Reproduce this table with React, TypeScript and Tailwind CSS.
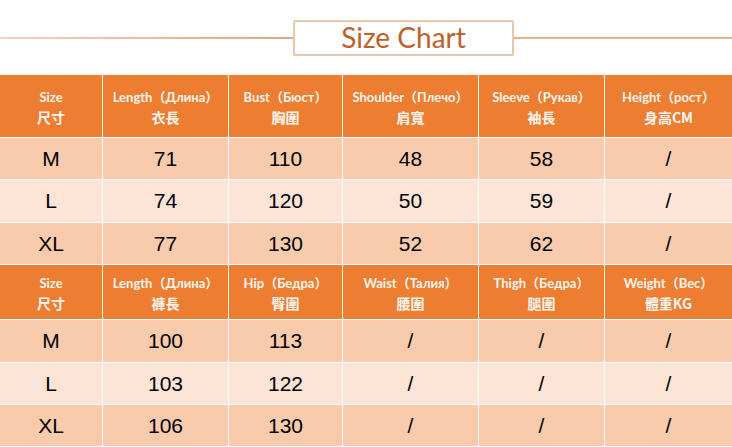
import React from 'react';

type Block = {
  heads: [string, string][];
  rows: string[][];
  rowHeights: string[];
};

const top: Block = {
  heads: [
    ['Size', '尺寸'],
    ['Length（Длина）', '衣長'],
    ['Bust（Бюст）', '胸圍'],
    ['Shoulder（Плечо）', '肩寬'],
    ['Sleeve（Рукав）', '袖長'],
    ['Height（рост）', '身高CM'],
  ],
  rows: [
    ['M', '71', '110', '48', '58', '/'],
    ['L', '74', '120', '50', '59', '/'],
    ['XL', '77', '130', '52', '62', '/'],
  ],
  rowHeights: ['h-[41px]', 'h-[42px]', 'h-[41px]'],
};

const bottom: Block = {
  heads: [
    ['Size', '尺寸'],
    ['Length（Длина）', '褲長'],
    ['Hip（Бедра）', '臀圍'],
    ['Waist（Талия）', '腰圍'],
    ['Thigh（Бедра）', '腿圍'],
    ['Weight（Вес）', '體重KG'],
  ],
  rows: [
    ['M', '100', '113', '/', '/', '/'],
    ['L', '103', '122', '/', '/', '/'],
    ['XL', '106', '130', '/', '/', '/'],
  ],
  rowHeights: ['h-[42px]', 'h-[41px]', 'h-[41px]'],
};

const cols = 'grid grid-cols-[102px_125px_113px_135px_125px_127px] gap-x-px';

function HeaderRow({ heads, height }: { heads: [string, string][]; height: string }) {
  return (
    <div className={`${cols} ${height}`}>
      {heads.map(([en, zh], i) => (
        <div
          key={i}
          className="flex flex-col items-center justify-center bg-[#ed7d31] pt-[2px] text-[#fff5ee] font-bold leading-[20px]"
        >
          <span className="text-[13px] font-['Lato','Noto_Sans_CJK_SC',sans-serif]">{en}</span>
          <span className="text-[14px] font-['Noto_Sans_CJK_SC',sans-serif]">{zh}</span>
        </div>
      ))}
    </div>
  );
}

function DataRow({ cells, light, height }: { cells: string[]; light: boolean; height: string }) {
  return (
    <div className={`${cols} ${height}`}>
      {cells.map((c, i) => (
        <div
          key={i}
          className={`flex items-center justify-center text-[21px] text-black font-['Liberation_Sans',Arial,sans-serif] ${
            light ? 'bg-[#fce4d6]' : 'bg-[#f8cbad]'
          }`}
        >
          {c}
        </div>
      ))}
    </div>
  );
}

function Section({ block, headHeight }: { block: Block; headHeight: string }) {
  return (
    <>
      <HeaderRow heads={block.heads} height={headHeight} />
      {block.rows.map((r, i) => (
        <DataRow key={i} cells={r} light={i === 1} height={block.rowHeights[i]} />
      ))}
    </>
  );
}

export default function App() {
  return (
    <div className="w-[732px] h-[447px] bg-white overflow-hidden">
      <div className="h-[75px] pt-[20px]">
        <div className="flex items-center h-[36px]">
          <div className="w-[293px] h-[2px] bg-gradient-to-r from-[#f1d3bf] to-[#dfa784]" />
          <div className="w-[221px] h-[36px] border-2 border-[#e9c6ab] rounded-[2px] flex items-center justify-center">
            <span className="text-[28px] leading-none text-[#c0602a] font-['Lato',sans-serif] pb-[2px]">
              Size Chart
            </span>
          </div>
          <div className="flex-1 h-[2px] bg-[#e3b393]" />
        </div>
      </div>
      <div className="flex flex-col gap-y-px">
        <Section block={top} headHeight="h-[62px]" />
        <Section block={bottom} headHeight="h-[54px]" />
      </div>
    </div>
  );
}
